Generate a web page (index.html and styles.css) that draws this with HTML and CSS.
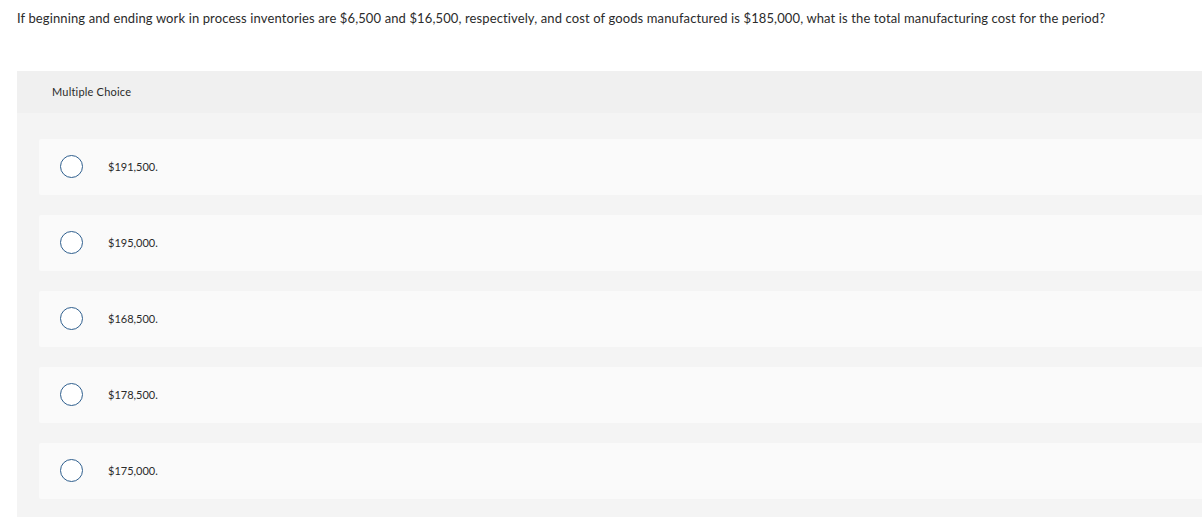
FILE: index.html
```html
<!DOCTYPE html>
<html>
<head>
<meta charset="utf-8">
<link rel="stylesheet" href="styles.css">
</head>
<body>
<p class="question">If beginning and ending work in process inventories are $6,500 and $16,500, respectively, and cost of goods manufactured is $185,000, what is the total manufacturing cost for the period?</p>
<section class="panel">
  <div class="panel-head">Multiple Choice</div>
  <div class="options">
    <label class="option"><span class="radio"></span><span class="opt-text">$191,500.</span></label>
    <label class="option"><span class="radio"></span><span class="opt-text">$195,000.</span></label>
    <label class="option"><span class="radio"></span><span class="opt-text">$168,500.</span></label>
    <label class="option"><span class="radio"></span><span class="opt-text">$178,500.</span></label>
    <label class="option"><span class="radio"></span><span class="opt-text">$175,000.</span></label>
  </div>
</section>
</body>
</html>
```
FILE: styles.css
```css
html, body {
  margin: 0;
  padding: 0;
  background: #ffffff;
  font-family: "Lato", "Open Sans", sans-serif;
  color: #2b2b2b;
}
.question {
  margin: 0;
  padding: 10px 0 0 17px;
  font-size: 13px;
  letter-spacing: 0.12px;
  line-height: 16px;
  height: 60px;
  box-sizing: border-box;
  white-space: nowrap;
}
.panel {
  margin: 11px 0 0 17px;
  background: #f4f4f4;
}
.panel-head {
  background: #f0f0f0;
  height: 42px;
  padding-left: 35px;
  display: flex;
  align-items: center;
  font-size: 11px;
  letter-spacing: 0.2px;
  padding-bottom: 1px;
  box-sizing: border-box;
}
.options {
  display: flex;
  flex-direction: column;
  gap: 20px;
  padding: 26px 0 20px 22px;
}
.option {
  display: flex;
  align-items: center;
  height: 56px;
  background: #fafafa;
  border-radius: 2px 0 0 2px;
  padding-left: 21px;
  padding-bottom: 1px;
  box-sizing: border-box;
  font-size: 11px;
}
.radio {
  width: 23px;
  height: 23px;
  border: 1.5px solid #2f5f8e;
  border-radius: 50%;
  background: #fff;
  box-sizing: border-box;
  flex: none;
}
.opt-text {
  margin-left: 25px;
}
```
